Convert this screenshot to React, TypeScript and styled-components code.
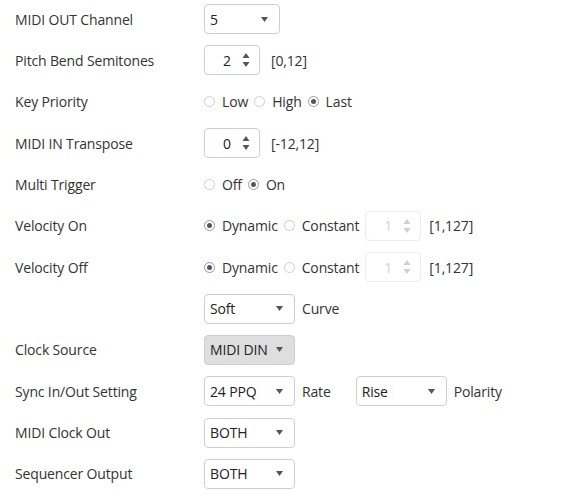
import React from "react";
import styled, { createGlobalStyle } from "styled-components";

const Global = createGlobalStyle`
  html, body { margin: 0; padding: 0; background: #fff; }
  body { font-family: "Open Sans", "Noto Sans", sans-serif; color: #333; }
`;

const Form = styled.div`
  display: grid;
  grid-template-columns: 189px 1fr;
  grid-auto-rows: 30px;
  row-gap: 11.36px;
  padding: 4px 0 0 15px;
  font-size: 14px;
  letter-spacing: -0.15px;
`;

const Label = styled.div`
  display: flex;
  align-items: center;
  white-space: nowrap;
`;

const Controls = styled.div`
  display: flex;
  align-items: center;
  white-space: nowrap;
`;

const SelectBox = styled.div<{ $w: number; $disabled?: boolean }>`
  box-sizing: border-box;
  width: ${(p) => p.$w}px;
  height: 30px;
  border: 1px solid #cfcfcf;
  border-radius: 4px;
  background: ${(p) => (p.$disabled ? "#dedede" : "#fff")};
  display: flex;
  align-items: center;
  justify-content: space-between;
  padding: 0 11px 0 5px;
  color: #222;
`;

const Caret = styled.svg`
  width: 7px;
  height: 5px;
  fill: #555;
`;

const Spin = styled.div<{ $disabled?: boolean }>`
  box-sizing: border-box;
  width: 56px;
  height: 30px;
  border: 1px solid ${(p) => (p.$disabled ? "#ececec" : "#cfcfcf")};
  border-radius: 4px;
  display: flex;
  align-items: center;
  padding-left: 18px;
  color: ${(p) => (p.$disabled ? "#d4d4d4" : "#222")};
`;

const SpinValue = styled.span`
  flex: 1;
`;

const SpinArrows = styled.svg<{ $disabled?: boolean }>`
  width: 8px;
  height: 14px;
  margin-right: 9px;
  fill: ${(p) => (p.$disabled ? "#cfcfcf" : "#555")};
`;

const Note = styled.span<{ $ml: number }>`
  margin-left: ${(p) => p.$ml}px;
`;

const RadioItem = styled.span<{ $ml?: number }>`
  display: inline-flex;
  align-items: center;
  margin-left: ${(p) => p.$ml ?? 0}px;
`;

const RadioDot = styled.span<{ $on?: boolean }>`
  box-sizing: border-box;
  width: 11px;
  height: 11px;
  border-radius: 50%;
  border: 1px solid ${(p) => (p.$on ? "#9a9a9a" : "#cfcfcf")};
  background: #fff;
  margin-right: 7px;
  display: flex;
  align-items: center;
  justify-content: center;
  &::after {
    content: "";
    display: ${(p) => (p.$on ? "block" : "none")};
    width: 5px;
    height: 5px;
    border-radius: 50%;
    background: #555;
  }
`;

const Select = ({ value, w, disabled }: { value: string; w: number; disabled?: boolean }) => (
  <SelectBox $w={w} $disabled={disabled}>
    <span>{value}</span>
    <Caret viewBox="0 0 7 5">
      <path d="M0 0H7L3.5 5Z" />
    </Caret>
  </SelectBox>
);

const Spinner = ({ value, disabled }: { value: string; disabled?: boolean }) => (
  <Spin $disabled={disabled}>
    <SpinValue>{value}</SpinValue>
    <SpinArrows viewBox="0 0 8 14" $disabled={disabled}>
      <path d="M4 0L7.5 5H0.5Z" />
      <path d="M0.5 9H7.5L4 14Z" />
    </SpinArrows>
  </Spin>
);

const Radio = ({ label, on, ml }: { label: string; on?: boolean; ml?: number }) => (
  <RadioItem $ml={ml}>
    <RadioDot $on={on} />
    {label}
  </RadioItem>
);

export default function App() {
  return (
    <>
      <Global />
      <Form>
        <Label>MIDI OUT Channel</Label>
        <Controls>
          <Select value="5" w={76} />
        </Controls>

        <Label>Pitch Bend Semitones</Label>
        <Controls>
          <Spinner value="2" />
          <Note $ml={11}>[0,12]</Note>
        </Controls>

        <Label>Key Priority</Label>
        <Controls>
          <Radio label="Low" />
          <Radio label="High" ml={6} />
          <Radio label="Last" on ml={6} />
        </Controls>

        <Label>MIDI IN Transpose</Label>
        <Controls>
          <Spinner value="0" />
          <Note $ml={11}>[-12,12]</Note>
        </Controls>

        <Label>Multi Trigger</Label>
        <Controls>
          <Radio label="Off" />
          <Radio label="On" on ml={6} />
        </Controls>

        <Label>Velocity On</Label>
        <Controls>
          <Radio label="Dynamic" on />
          <Radio label="Constant" ml={6} />
          <Note $ml={6}>
            <Spinner value="1" disabled />
          </Note>
          <Note $ml={8}>[1,127]</Note>
        </Controls>

        <Label>Velocity Off</Label>
        <Controls>
          <Radio label="Dynamic" on />
          <Radio label="Constant" ml={6} />
          <Note $ml={6}>
            <Spinner value="1" disabled />
          </Note>
          <Note $ml={8}>[1,127]</Note>
        </Controls>

        <Label />
        <Controls>
          <Select value="Soft" w={91} />
          <Note $ml={7}>Curve</Note>
        </Controls>

        <Label>Clock Source</Label>
        <Controls>
          <Select value="MIDI DIN" w={91} disabled />
        </Controls>

        <Label>Sync In/Out Setting</Label>
        <Controls>
          <Select value="24 PPQ" w={91} />
          <Note $ml={7}>Rate</Note>
          <Note $ml={25}>
            <Select value="Rise" w={91} />
          </Note>
          <Note $ml={7}>Polarity</Note>
        </Controls>

        <Label>MIDI Clock Out</Label>
        <Controls>
          <Select value="BOTH" w={91} />
        </Controls>

        <Label>Sequencer Output</Label>
        <Controls>
          <Select value="BOTH" w={91} />
        </Controls>
      </Form>
    </>
  );
}
